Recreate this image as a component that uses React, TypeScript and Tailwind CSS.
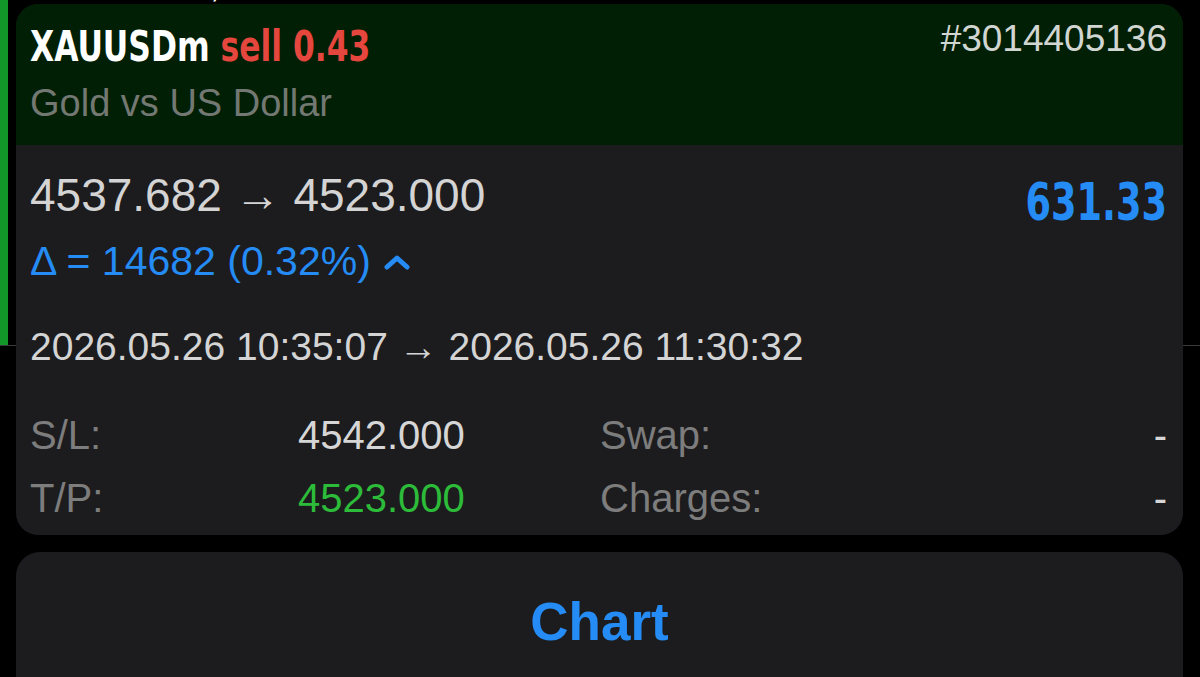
import React from "react";

const narrow = "font-['DejaVu_Sans_Condensed','DejaVu_Sans',sans-serif]";

export default function App() {
  return (
    <div className="relative h-[677px] w-[1200px] overflow-hidden bg-black font-['Liberation_Sans',Arial,sans-serif]">
      {/* background list (behind popup) */}
      <div className="flex h-[345px]">
        <div className="w-[8px] bg-[#12962a]" />
        <div className="flex h-[5px] flex-1 justify-between overflow-hidden pl-[22px] pr-[30px]">
          <div className="-mt-[33px] text-[36px] leading-[36px] text-white">XAUUSDm, sell 0.43</div>
          <div className="-mt-[33px] text-[36px] leading-[36px] text-white">4537.682 → 4523.000</div>
        </div>
      </div>
      <div className="h-px bg-[#3a3a3c]" />

      {/* popup */}
      <div className="absolute left-[16px] top-[4px] flex w-[1167px] flex-col gap-[17px]">
        <div className="overflow-hidden rounded-[22px] bg-[#1c1c1e]">
          {/* header */}
          <div className="h-[141px] bg-[#011f04] pl-[14px] pr-[16px]">
            <div className="flex items-start justify-between">
              <div className={`${narrow} mt-[19px] origin-left scale-x-[0.83] whitespace-nowrap text-[42px] font-bold leading-[48px]`}>
                <span className="text-white">XAUUSDm</span>{" "}
                <span className="text-[#e5463d]">sell 0.43</span>
              </div>
              <div className="mt-[13px] text-[37px] leading-[44px] text-[#d2d6d2]">#3014405136</div>
            </div>
            <div className="mt-[10px] text-[38px] leading-[44px] text-[#737873]">Gold vs US Dollar</div>
          </div>

          {/* body */}
          <div className="h-[390px] pl-[14px] pr-[16px] pt-[22px]">
            <div className="flex items-start justify-between">
              <div>
                <div className="text-[46px] leading-[56px] text-[#d4d4d4]">4537.682 → 4523.000</div>
                <div className="mt-[14px] flex items-center text-[41px] leading-[48px] text-[#258cf5]">
                  <span>Δ = 14682 (0.32%)</span>
                  <svg className="ml-[13px] mt-[2px]" width="26" height="16" viewBox="0 0 26 16">
                    <path d="M3 13 L13 4 L23 13" fill="none" stroke="#258cf5" strokeWidth="5" strokeLinecap="round" strokeLinejoin="round" />
                  </svg>
                </div>
              </div>
              <div className={`${narrow} mt-[6px] origin-right scale-x-[0.8] text-[51px] font-bold leading-[60px] text-[#258cf5]`}>631.33</div>
            </div>

            <div className="mt-[38px] text-[39px] leading-[48px] text-[#d4d4d4]">
              2026.05.26 10:35:07 → 2026.05.26 11:30:32
            </div>

            <div className="mt-[40px] grid grid-cols-[268px_302px_1fr_auto] gap-y-[15px] text-[40px] leading-[48px]">
              <div className="text-[#7d7d7d]">S/L:</div>
              <div className="text-[#d6d6d6]">4542.000</div>
              <div className="text-[#7d7d7d]">Swap:</div>
              <div className="text-right text-[#d6d6d6]">-</div>
              <div className="text-[#7d7d7d]">T/P:</div>
              <div className="text-[#2dbb3a]">4523.000</div>
              <div className="text-[#7d7d7d]">Charges:</div>
              <div className="text-right text-[#d6d6d6]">-</div>
            </div>
          </div>
        </div>

        {/* chart button */}
        <div className="h-[200px] rounded-[24px] bg-[#1c1c1e] pt-[40px] text-center">
          <div className="text-[53px] font-bold leading-[60px] text-[#258cf5]">Chart</div>
        </div>
      </div>
    </div>
  );
}
